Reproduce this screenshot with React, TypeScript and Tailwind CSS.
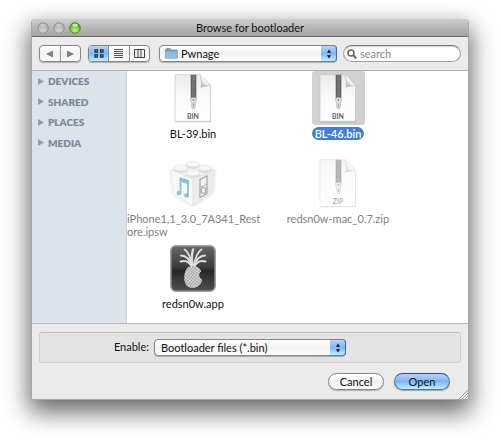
import type { ReactNode } from "react";

const control =
  "border border-[#858585] bg-linear-to-b from-white via-[#f1f1f1] via-50% to-[#fdfdfd] shadow-[0_1px_1px_rgba(0,0,0,0.25)]";
const aqua = "bg-linear-to-b from-[#b9d5f5] via-[#7db5f0] via-50% to-[#bdf0ff]";

function Light({ on = false, label }: { on?: boolean; label: string }) {
  return (
    <button aria-label={label} className="size-3">
      <svg viewBox="0 0 12 12" className="size-3">
        <defs>
          <radialGradient id={on ? "green" : "grey"} cx="50%" cy="75%" r="65%">
            <stop offset="0" stopColor={on ? "#c4f77d" : "#d2d2d2"} />
            <stop offset="0.6" stopColor={on ? "#82cc48" : "#bcbcbc"} />
            <stop offset="1" stopColor={on ? "#56a02b" : "#a5a5a5"} />
          </radialGradient>
        </defs>
        <circle cx="6" cy="6" r="5.3" fill={on ? "url(#green)" : "url(#grey)"} stroke={on ? "#3f7420" : "#8e8e8e"} strokeWidth="0.8" />
        <ellipse cx="6" cy="3" rx="2.8" ry="1.5" fill="#fff" opacity={on ? 0.7 : 0.35} />
      </svg>
    </button>
  );
}

function Stepper() {
  return (
    <span className={`pointer-events-none absolute right-0 top-0 flex h-[17px] w-4 items-center justify-center rounded-r-[4px] border border-l-0 border-t-[#7a7cb5] border-r-[#3b6db5] border-b-[#5a7d9b] ${aqua}`}>
      <svg viewBox="0 0 6 10" className="h-[10px] w-[6px]">
        <path d="M3 0.5 5 3.7H1zM3 9.5 1 6.3h4z" fill="#111" />
      </svg>
    </span>
  );
}

function DocIcon({ kind, faded = false }: { kind: string; faded?: boolean }) {
  return (
    <svg viewBox="0 0 38 49" className={faded ? "h-[49px] w-[38px] opacity-50" : "h-[49px] w-[38px]"}>
      <defs>
        <linearGradient id="page" x1="0" y1="0" x2="0" y2="1">
          <stop offset="0" stopColor="#ececec" />
          <stop offset="0.5" stopColor="#fafafa" />
          <stop offset="1" stopColor="#fff" />
        </linearGradient>
        <linearGradient id="fold" x1="0" y1="1" x2="1" y2="0">
          <stop offset="0" stopColor="#b5b5b5" />
          <stop offset="0.5" stopColor="#fff" />
          <stop offset="1" stopColor="#e5e5e5" />
        </linearGradient>
      </defs>
      <path d="M1.5 1h25L37 12v36.3H1.5z" fill="#000" opacity="0.22" />
      <path d="M1 .7h25.5L36.6 11.5v35.8H1z" fill="url(#page)" stroke="#c5c5c5" strokeWidth="0.7" />
      <path d="M25.5.7c1.6 3 1.7 7 1.2 13 3.5-1.5 7-1.5 9.900-2.200z" fill="#777" opacity="0.5" />
      <path d="M26.5.9c1 3 1 6.500.6 10.700 3.200-.6 6.500-.4 9.300.2z" fill="url(#fold)" />
      <path d="M17 .8h5v24h-5z" fill="#686868" />
      <path d="M19.5.8v24" stroke="#858585" strokeWidth="2.400" strokeDasharray="1 1" />
      <path d="M17 .8v24M22 .8v24" stroke="#555" strokeWidth="0.6" />
      <path d="M17.300 23.500h4.400l.7 3-1.200 2v4.500a1.700 1.700 0 0 1-3.400 0v-4.500l-1.200-2z" fill="#e4e4e4" stroke="#999" strokeWidth="0.6" />
      <circle cx="19.500" cy="26" r="1" fill="#888" />
      <path d="M19.500 29.500v3.500" stroke="#999" strokeWidth="0.9" />
      <text x="19" y="44.500" textAnchor="middle" fontFamily="Lato, sans-serif" fontSize="7" fontWeight="600" fill="#555">
        {kind}
      </text>
    </svg>
  );
}

function BrickIcon() {
  const studs = [
    [24, 6],
    [12, 10],
    [36, 10],
    [24, 15],
  ];
  return (
    <svg viewBox="0 0 48 48" className="size-12">
      <path d="M0 12 24 4l24 8-2 23-22 14L2 36z" fill="#999" opacity="0.1" />
      <path d="M2 11 24 4l22 7-22 9z" fill="#f1f1f3" stroke="#e0e0e3" strokeWidth="0.6" />
      <path d="M2 11l22 9v27L5 34z" fill="#f9f9fa" stroke="#e6e6e8" strokeWidth="0.6" />
      <path d="M46 11l-22 9v27l19-13z" fill="#ececef" stroke="#dedee1" strokeWidth="0.6" />
      {studs.map(([x, y]) => (
        <g key={`${x}-${y}`}>
          <path d={`M${x - 7} ${y - 1}v2a7 3 0 0 0 14 0v-2z`} fill="#dedee2" />
          <ellipse cx={x} cy={y - 1} rx="7" ry="2.800" fill="#f7f7f9" stroke="#dcdce0" strokeWidth="0.5" />
        </g>
      ))}
      <path d="M11.500 34V19.500l7.500 2.500v14" fill="none" stroke="#84c0ee" strokeWidth="1.800" />
      <path d="M10.600 18.600l9.300 3v4l-9.300-3z" fill="#84c0ee" />
      <ellipse cx="10" cy="34" rx="2.500" ry="2.200" fill="#84c0ee" />
      <ellipse cx="17.600" cy="36.500" rx="2.500" ry="2.200" fill="#84c0ee" />
      <path d="M31 20.500l7-3.500v17.500L31 38.500z" fill="#f2f2f4" stroke="#aaa" strokeWidth="1.300" />
      <path d="M31 28.500l7-3.500" stroke="#aaa" strokeWidth="1" />
      <ellipse cx="34.500" cy="31.500" rx="2.200" ry="3" fill="none" stroke="#aaa" strokeWidth="1.200" />
    </svg>
  );
}

function PineappleIcon() {
  return (
    <svg viewBox="0 0 46 47" className="h-[47px] w-[46px]">
      <defs>
        <linearGradient id="tile" x1="0" y1="0" x2="0" y2="1">
          <stop offset="0" stopColor="#686868" />
          <stop offset="0.48" stopColor="#3b3939" />
          <stop offset="0.55" stopColor="#292626" />
          <stop offset="1" stopColor="#505050" />
        </linearGradient>
        <pattern id="skin" width="2.400" height="2.400" patternUnits="userSpaceOnUse" patternTransform="rotate(38)">
          <path d="M0 0h3v3H0z" fill="#d8d8d8" />
          <path d="M0 0h3M0 0v3" stroke="#888" strokeWidth="0.800" />
        </pattern>
      </defs>
      <rect x="0.8" y="0.8" width="44.400" height="45.400" rx="5" fill="url(#tile)" stroke="#a0a0a0" strokeWidth="1.600" />
      <g fill="none" stroke="#dedede" strokeWidth="1.900" strokeLinecap="round">
        <path d="M23 22c-1.500-6-1.500-12 0-17.500" strokeWidth="2.400" />
        <path d="M22.500 22C21 14 19 7 14.500 4.500M23.500 22c1.500-8 3.500-15 8-17.500" />
        <path d="M22 22c-2-7-5-11.500-11-11.500M24 22c2-7 5-11.500 11-11.500" />
        <path d="M22 22.500c-2-4.500-5-8-11.500-6M24 22.500c2-4.500 5-8 11.500-6" />
      </g>
      <path d="M18.500 22c3-1.500 6.500-1.500 9 0 1.800 1 3.200 2.500 3.700 4.600-3 2-2.500 6.400 1 8-1 5-4.500 8.400-9.500 8.400-5 0-8.500-4-8.500-10 0-5 1.500-9 4.300-11z" fill="url(#skin)" />
    </svg>
  );
}

type Item = { name: string; icon: ReactNode; selected?: boolean; dim?: boolean };

const items: Item[] = [
  { name: "BL-39.bin", icon: <DocIcon kind="BIN" /> },
  { name: "BL-46.bin", icon: <DocIcon kind="BIN" />, selected: true },
  { name: "iPhone1,1_3.0_7A341_Rest\u200bore.ipsw", icon: <BrickIcon />, dim: true },
  { name: "redsn0w-mac_0.7.zip", icon: <DocIcon kind="ZIP" faded />, dim: true },
  { name: "redsn0w.app", icon: <PineappleIcon /> },
];

function FileTile({ name, icon, selected, dim }: Item) {
  return (
    <button disabled={dim} className="flex h-[85px] flex-col items-center gap-[2px] text-left">
      <span className={`flex h-[54px] w-[53px] shrink-0 items-center justify-center rounded-[3px] ${selected ? "bg-[#d1d1d1]" : ""}`}>{icon}</span>
      <span
        className={`max-w-full rounded-full leading-[13px] ${
          selected ? "bg-[#3d80df] px-[3px] font-semibold text-white" : dim ? "text-[#808080]" : "text-[#111]"
        }`}
      >
        {name}
      </span>
    </button>
  );
}

export default function App() {
  return (
    <main className="bg-white px-[31px] pt-[19px] pb-[43px] font-['Lato','Open_Sans',sans-serif] text-[11px] text-[#111]">
      <section className="relative flex flex-col rounded-t-[4px] border-x border-b border-[#a8a8a8] bg-[#ebebeb] shadow-[0_10px_24px_2px_rgba(0,0,0,0.6)]">
        <header className="grid h-[18px] grid-cols-[1fr_auto_1fr] items-center rounded-t-[4px] border-b border-[#686868] bg-linear-to-b from-[#cecece] to-[#a3a3a3] px-[5px]">
          <div className="flex gap-1">
            <Light label="Close" />
            <Light label="Minimize" />
            <Light label="Zoom" on />
          </div>
          <h1 className="leading-4">Browse for bootloader</h1>
        </header>

        <div className="flex h-[34px] items-center border-b border-[#b0b0b0] px-[7px]">
          <div className={`flex h-[17px] w-[42px] rounded-[4px] ${control}`}>
            <button aria-label="Back" className="flex flex-1 items-center justify-center border-r border-[#999]">
              <svg viewBox="0 0 8 8" className="size-2"><path d="M0 4 7 .5v7z" fill="#808080" /></svg>
            </button>
            <button aria-label="Forward" className="flex flex-1 items-center justify-center">
              <svg viewBox="0 0 8 8" className="size-2"><path d="M8 4 1 .5v7z" fill="#808080" /></svg>
            </button>
          </div>
          <div className={`ml-[7px] flex h-[17px] w-[62px] overflow-hidden rounded-[4px] ${control}`}>
            <button aria-label="Icon view" className={`flex flex-1 items-center justify-center border-r border-[#6d8fb5] ${aqua}`}>
              <svg viewBox="0 0 10 9" className="h-[9px] w-[10px]" fill="none" stroke="#1d2a3a" strokeWidth="1.200">
                <path d="M1 .8h2.400v2.400H1zM6.600.8H9v2.400H6.600zM1 5.800h2.400v2.400H1zM6.600 5.800H9v2.400H6.600z" />
              </svg>
            </button>
            <button aria-label="List view" className="flex flex-1 items-center justify-center border-r border-[#888]">
              <svg viewBox="0 0 9 9" className="size-[9px]" stroke="#444"><path d="M0 .5h9M0 2.500h9M0 4.500h9M0 6.500h9M0 8.500h9" strokeWidth="0.900" /></svg>
            </button>
            <button aria-label="Column view" className="flex flex-1 items-center justify-center">
              <svg viewBox="0 0 11 9" className="h-[9px] w-[11px]" fill="none" stroke="#444"><path d="M.5.5h10v8H.5zM4 .5v8M7 .5v8" /></svg>
            </button>
          </div>
          <div className="relative ml-[9px] h-[17px] flex-1">
            <select aria-label="Folder" className={`block h-[17px] w-full appearance-none rounded-[4px] pl-[21px] leading-[15px] ${control}`}>
              <option>Pwnage</option>
            </select>
            <svg viewBox="0 0 13 11" className="pointer-events-none absolute left-[6px] top-[3px] h-[11px] w-[13px]">
              <path d="M.5 10V1.500l1-1h3.500l1 1.500h6l.5.8V10z" fill="#6c9cc4" stroke="#5c87ad" strokeWidth="0.6" />
              <path d="M.5 3.500h12V10l-.5.700H1L.5 10z" fill="#93bbdb" />
            </svg>
            <Stepper />
          </div>
          <div className="relative ml-[6px]">
            <input
              type="search"
              aria-label="Search"
              placeholder="search"
              className="block h-[17px] w-[118px] rounded-full border border-[#a0a0a0] border-t-[#777] bg-white pl-4 leading-[15px] shadow-[inset_0_1px_1px_rgba(0,0,0,0.2)] placeholder:text-[#888]"
            />
            <svg viewBox="0 0 10 10" className="pointer-events-none absolute left-1 top-1 size-[10px]" fill="none" stroke="#666" strokeWidth="1.600">
              <circle cx="4" cy="4" r="3" />
              <path d="m6.300 6.300 3 3" strokeWidth="2" />
            </svg>
          </div>
        </div>

        <div className="flex h-[253px] border-b border-[#b9b9b9] bg-white">
          <nav className="w-[95px] border-r border-[#cbd0d7] bg-[#dde3eb]">
            <ul className="flex h-[82px] flex-col">
              {["DEVICES", "SHARED", "PLACES", "MEDIA"].map((s) => (
                <li key={s} className="flex flex-1">
                  <button className="flex w-full items-center gap-1 pl-[6px] text-[10px] leading-5 font-extrabold text-[#7b8897]">
                    <svg viewBox="0 0 6 7" className="h-[7px] w-[6px]"><path d="M0 0 6 3.500 0 7z" fill="#929ca9" /></svg>
                    {s}
                  </button>
                </li>
              ))}
            </ul>
          </nav>
          <div className="grid flex-1 auto-rows-[85px] grid-cols-[132px_132px] content-start gap-x-[13px]">
            {items.map((item) => (
              <FileTile key={item.name} {...item} />
            ))}
          </div>
        </div>

        <footer className="px-[7px] pt-2 pb-[9px]">
          <div className="flex h-[31px] items-center rounded-[3px] border border-[#cfcfcf] border-t-[#bdbdbd] bg-[#e4e4e4]">
            <label htmlFor="enable" className="w-[114px] pr-[5px] text-right">Enable:</label>
            <div className="relative h-[17px] w-[192px]">
              <select id="enable" className={`block h-[17px] w-full appearance-none rounded-[4px] pl-[6px] leading-[15px] ${control}`}>
                <option>Bootloader files (*.bin)</option>
              </select>
              <Stepper />
            </div>
          </div>
          <div className="mt-[10px] flex justify-end gap-[10px] pr-[11px]">
            <button className={`h-[17px] w-14 rounded-full leading-[15px] ${control}`}>Cancel</button>
            <button className={`h-[17px] w-14 rounded-full border border-[#5276a5] border-t-[#35469b] leading-[15px] shadow-[0_1px_1px_rgba(0,0,0,0.3)] ${aqua}`}>Open</button>
          </div>
        </footer>
        <svg viewBox="0 0 9 9" className="absolute right-0 bottom-0 size-[9px]" stroke="#8c8c8c" strokeWidth="0.9">
          <path d="M0 9 9 0M3 9 9 3M6 9 9 6" />
        </svg>
      </section>
    </main>
  );
}
